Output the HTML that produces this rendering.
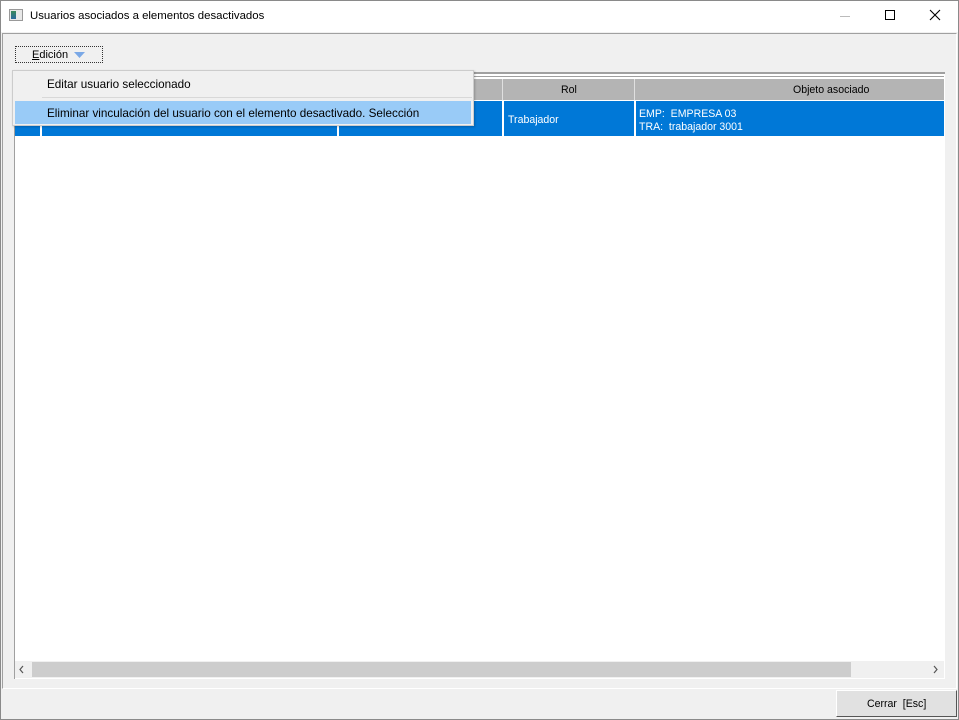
<!DOCTYPE html>
<html><head><meta charset="utf-8"><style>
*{margin:0;padding:0;box-sizing:border-box}
body{width:959px;height:720px;background:#f0f0f0;font-family:"Liberation Sans",sans-serif;font-size:12px;color:#000;position:relative;overflow:hidden}
.abs{position:absolute}
.c{font-size:11px;transform:scaleX(.96);transform-origin:left top;white-space:nowrap}
</style></head><body>
<div class="abs" style="left:0;top:0;width:959px;height:720px;border:1px solid #8a8a8a"></div>
<div class="abs" style="left:1px;top:1px;width:957px;height:31px;background:#fff"></div>
<div class="abs" style="left:9px;top:9px;width:14px;height:12px;border:1px solid #999;background:#e8e8e8"><div style="position:absolute;left:1px;top:1px;width:5px;height:8px;background:linear-gradient(#3a8a5a,#2a6aa0)"></div></div>
<div class="abs" style="left:30px;top:10px;font-size:11.4px">Usuarios asociados a elementos desactivados</div>
<div class="abs" style="left:840px;top:16px;width:10px;height:1px;background:#bbb"></div>
<div class="abs" style="left:885px;top:10px;width:10px;height:10px;border:1px solid #000"></div>
<svg class="abs" style="left:929px;top:9px" width="12" height="12"><path d="M1 1L11 11M11 1L1 11" stroke="#000" stroke-width="1.1"/></svg>
<!-- panel -->
<div class="abs" style="left:2px;top:33px;width:955px;height:656px;border:1px solid #a0a0a0;border-right-color:#fff;border-bottom-color:#fff"></div>
<div class="abs" style="left:15px;top:46px;width:88px;height:17px;border:1px dotted #333"></div>
<div class="abs" style="left:32px;top:49px;font-size:11px"><u>E</u>dición</div>
<svg class="abs" style="left:74px;top:52px" width="11" height="6"><path d="M0 0H11L5.5 6Z" fill="#7aa8e6"/></svg>
<!-- grid -->
<div class="abs" style="left:14px;top:72px;width:931px;height:607px;background:#fff;border-top:2px solid #a0a0a0;border-left:1px solid #a0a0a0"></div>
<div class="abs" style="left:15px;top:76px;width:929px;height:1px;background:#a0a0a0"></div>
<div class="abs" style="left:15px;top:79px;width:929px;height:21px;background:#b4b4b4"></div>
<div class="abs" style="left:502px;top:79px;width:1px;height:21px;background:#e0e0e0"></div>
<div class="abs" style="left:634px;top:79px;width:1px;height:21px;background:#e0e0e0"></div>
<div class="abs c" style="left:561px;top:84px">Rol</div>
<div class="abs c" style="left:793px;top:84px">Objeto asociado</div>
<div class="abs" style="left:15px;top:101px;width:929px;height:35px;background:#0078d7"></div>
<div class="abs" style="left:40px;top:101px;width:2px;height:35px;background:#fff"></div>
<div class="abs" style="left:337px;top:101px;width:2px;height:35px;background:#fff"></div>
<div class="abs" style="left:502px;top:101px;width:2px;height:35px;background:#fff"></div>
<div class="abs" style="left:634px;top:101px;width:2px;height:35px;background:#fff"></div>
<div class="abs c" style="left:508px;top:114px;color:#fff">Trabajador</div>
<div class="abs c" style="left:639px;top:108px;color:#fff;line-height:13px">EMP:&nbsp; EMPRESA 03<br>TRA:&nbsp; trabajador 3001</div>
<!-- scrollbar -->
<div class="abs" style="left:15px;top:661px;width:929px;height:17px;background:#f0f0f0"></div>
<div class="abs" style="left:32px;top:662px;width:819px;height:15px;background:#cdcdcd"></div>
<svg class="abs" style="left:19px;top:665px" width="6" height="9"><path d="M4 1L1 4.5L4 8" stroke="#555" fill="none" stroke-width="1.2"/></svg>
<svg class="abs" style="left:933px;top:665px" width="6" height="9"><path d="M1 1L4 4.5L1 8" stroke="#555" fill="none" stroke-width="1.2"/></svg>
<!-- menu -->
<div class="abs" style="left:12px;top:70px;width:462px;height:56px;background:#f0f0f0;border:1px solid #ccc;box-shadow:1px 1px 2px rgba(0,0,0,.2)"></div>
<div class="abs" style="left:47px;top:78px;font-size:11.7px">Editar usuario seleccionado</div>
<div class="abs" style="left:42px;top:97px;width:430px;height:1px;background:#d8d8d8"></div>
<div class="abs" style="left:15px;top:101px;width:456px;height:23px;background:#99cbf7"></div>
<div class="abs" style="left:47px;top:107px;font-size:11.7px">Eliminar vinculación del usuario con el elemento desactivado. Selección</div>
<!-- button -->
<div class="abs" style="left:836px;top:690px;width:121px;height:27px;background:#e1e1e1;border:1px solid #fff;border-right-color:#555;border-bottom-color:#555"></div>
<div class="abs c" style="left:867px;top:698px">Cerrar&nbsp; [Esc]</div>
</body></html>
